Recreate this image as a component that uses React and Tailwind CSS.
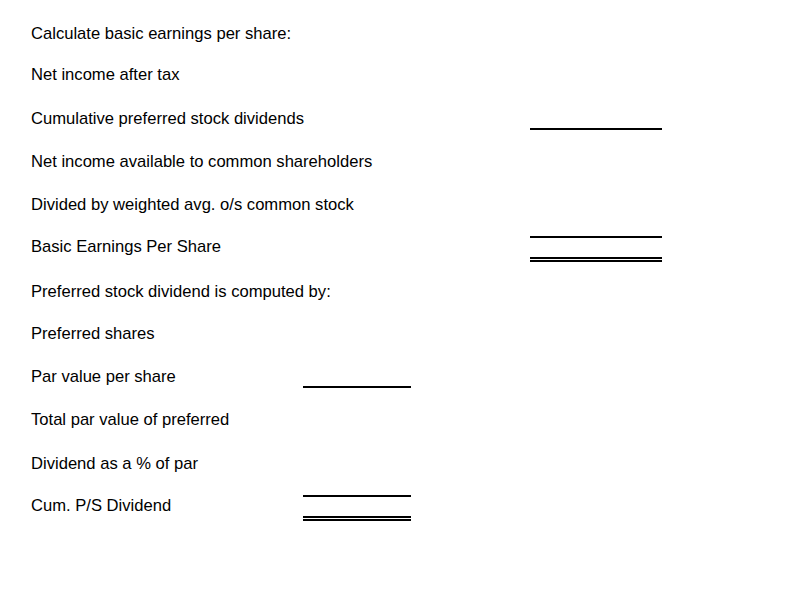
const rows = [
  { label: 'Calculate basic earnings per share:', h: 41 },
  { label: 'Net income after tax', h: 44 },
  { label: 'Cumulative preferred stock dividends', h: 43, right: 'under' },
  { label: 'Net income available to common shareholders', h: 43 },
  { label: 'Divided by weighted avg. o/s common stock', h: 42 },
  { label: 'Basic Earnings Per Share', h: 45, right: 'total' },
  { label: 'Preferred stock dividend is computed by:', h: 42 },
  { label: 'Preferred shares', h: 43 },
  { label: 'Par value per share', h: 43, left: 'under' },
  { label: 'Total par value of preferred', h: 44 },
  { label: 'Dividend as a % of par', h: 42 },
  { label: 'Cum. P/S Dividend', h: 43, left: 'total' },
];

function Rule({ kind }) {
  if (kind === 'under') {
    return (
      <div className="pt-[19px]">
        <div className="h-[2px] bg-black" />
      </div>
    );
  }
  if (kind === 'total') {
    return (
      <div className="-mt-px">
        <div className="h-[2px] bg-black" />
        <div className="h-[19px]" />
        <div className="h-[2px] bg-black" />
        <div className="h-px" />
        <div className="h-[2px] bg-black" />
      </div>
    );
  }
  return null;
}

export default function App() {
  return (
    <div
      className="w-[796px] h-[590px] bg-white text-black pt-6 pl-[31px]"
      style={{ fontFamily: '"Liberation Sans", Arial, sans-serif' }}
    >
      {rows.map((row, i) => (
        <div
          key={i}
          className="grid grid-cols-[272px_108px_119px_132px]"
          style={{ height: row.h }}
        >
          <div className="text-[16.6px] leading-[19px] whitespace-nowrap">{row.label}</div>
          <div>{row.left && <Rule kind={row.left} />}</div>
          <div />
          <div>{row.right && <Rule kind={row.right} />}</div>
        </div>
      ))}
    </div>
  );
}
